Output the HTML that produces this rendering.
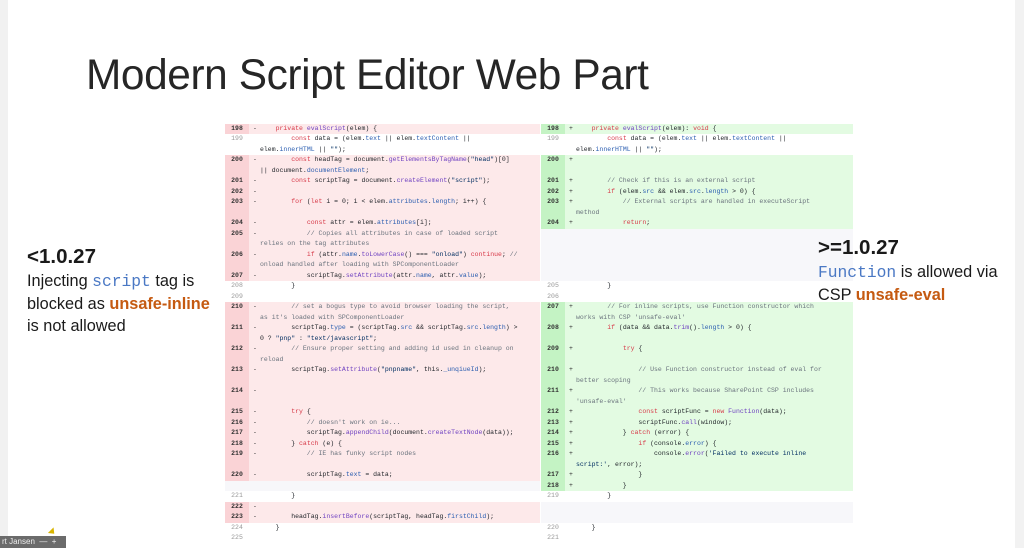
<!DOCTYPE html>
<html><head><meta charset="utf-8"><style>
*{margin:0;padding:0;box-sizing:border-box}
body{width:1024px;height:548px;overflow:hidden;background:#fff;position:relative;font-family:"Liberation Sans",sans-serif}
.lstrip{position:absolute;left:0;top:0;width:8px;height:548px;background:#f1f1f1}
.rstrip{position:absolute;right:0;top:0;width:9px;height:548px;background:#f2f2f2}
h1{position:absolute;left:86px;top:51px;font-weight:normal;font-size:42.4px;color:#262626;letter-spacing:-0.4px;white-space:nowrap}
.panel{position:absolute;top:123.5px;font-family:"Liberation Mono",monospace;font-size:6.5px;color:#1f2328}
.row{position:relative;line-height:10.5px;white-space:pre}
.row .g{position:absolute;left:0;top:0;bottom:0;width:24px;text-align:center;color:#333;font-weight:bold}
.row .s{position:absolute;top:0;color:#333}
.row .c{position:absolute;top:0}
.d{background:#fde9ea}.d .g{background:#fad3d6}
.a{background:#e3fbe2}.a .g{background:#c4f3c4}
.n{background:#fff}.n .g{color:#999;font-weight:normal}
.e{background:#f7f7fa}
.k{color:#d73a49}.f{color:#6f42c1}.b{color:#2a5db0}.m{color:#6a737d}.t{color:#032f62}
.L{left:225px;width:315px}.L .s{left:28px}.L .c{left:35px}
.R{left:541px;width:312px}.R .s{left:28px}.R .c{left:35px}
.txt{position:absolute;color:#1a1a1a;font-size:16.3px;line-height:22px;white-space:nowrap}
.txt b.h{font-size:20.5px;display:block;line-height:26px}
.mono{font-family:"Liberation Mono",monospace;color:#4a78c4}
.or{color:#c55a11;font-weight:bold}
.bar{position:absolute;left:0;top:536px;width:66px;height:12px;background:#6b6b6b;color:#eee;font-size:8px;line-height:12px;padding-left:2px;white-space:nowrap}
</style></head><body>
<div class="lstrip"></div><div class="rstrip"></div>
<h1>Modern Script Editor Web Part</h1>

<div class="panel L">
<div class="row d" style="height:10.5px"><span class="g">198</span><span class="s">-</span><span class="c">    <span class="k">private</span> <span class="f">evalScript</span>(elem) {</span></div>
<div class="row n" style="height:21px"><span class="g">199</span><span class="c">        <span class="k">const</span> data = (elem.<span class="b">text</span> || elem.<span class="b">textContent</span> ||
elem.<span class="b">innerHTML</span> || <span class="t">""</span>);</span></div>
<div class="row d" style="height:21px"><span class="g">200</span><span class="s">-</span><span class="c">        <span class="k">const</span> headTag = document.<span class="f">getElementsByTagName</span>(<span class="t">"head"</span>)[0]
|| document.<span class="b">documentElement</span>;</span></div>
<div class="row d" style="height:10.5px"><span class="g">201</span><span class="s">-</span><span class="c">        <span class="k">const</span> scriptTag = document.<span class="f">createElement</span>(<span class="t">"script"</span>);</span></div>
<div class="row d" style="height:10.5px"><span class="g">202</span><span class="s">-</span></div>
<div class="row d" style="height:21px"><span class="g">203</span><span class="s">-</span><span class="c">        <span class="k">for</span> (<span class="k">let</span> i = 0; i &lt; elem.<span class="b">attributes</span>.<span class="b">length</span>; i++) {</span></div>
<div class="row d" style="height:10.5px"><span class="g">204</span><span class="s">-</span><span class="c">            <span class="k">const</span> attr = elem.<span class="b">attributes</span>[i];</span></div>
<div class="row d" style="height:21px"><span class="g">205</span><span class="s">-</span><span class="c"><span class="m">            // Copies all attributes in case of loaded script
relies on the tag attributes</span></span></div>
<div class="row d" style="height:21px"><span class="g">206</span><span class="s">-</span><span class="c">            <span class="k">if</span> (attr.<span class="b">name</span>.<span class="f">toLowerCase</span>() === <span class="t">"onload"</span>) <span class="k">continue</span>; <span class="m">//
onload handled after loading with SPComponentLoader</span></span></div>
<div class="row d" style="height:10.5px"><span class="g">207</span><span class="s">-</span><span class="c">            scriptTag.<span class="f">setAttribute</span>(attr.<span class="b">name</span>, attr.<span class="b">value</span>);</span></div>
<div class="row n" style="height:10.5px"><span class="g">208</span><span class="c">        }</span></div>
<div class="row n" style="height:10.5px"><span class="g">209</span></div>
<div class="row d" style="height:21px"><span class="g">210</span><span class="s">-</span><span class="c"><span class="m">        // set a bogus type to avoid browser loading the script,
as it's loaded with SPComponentLoader</span></span></div>
<div class="row d" style="height:21px"><span class="g">211</span><span class="s">-</span><span class="c">        scriptTag.<span class="b">type</span> = (scriptTag.<span class="b">src</span> &amp;&amp; scriptTag.<span class="b">src</span>.<span class="b">length</span>) &gt;
0 ? <span class="t">"pnp"</span> : <span class="t">"text/javascript"</span>;</span></div>
<div class="row d" style="height:21px"><span class="g">212</span><span class="s">-</span><span class="c"><span class="m">        // Ensure proper setting and adding id used in cleanup on
reload</span></span></div>
<div class="row d" style="height:21px"><span class="g">213</span><span class="s">-</span><span class="c">        scriptTag.<span class="f">setAttribute</span>(<span class="t">"pnpname"</span>, this.<span class="b">_unqiueId</span>);</span></div>
<div class="row d" style="height:21px"><span class="g">214</span><span class="s">-</span></div>
<div class="row d" style="height:10.5px"><span class="g">215</span><span class="s">-</span><span class="c">        <span class="k">try</span> {</span></div>
<div class="row d" style="height:10.5px"><span class="g">216</span><span class="s">-</span><span class="c"><span class="m">            // doesn't work on ie...</span></span></div>
<div class="row d" style="height:10.5px"><span class="g">217</span><span class="s">-</span><span class="c">            scriptTag.<span class="f">appendChild</span>(document.<span class="f">createTextNode</span>(data));</span></div>
<div class="row d" style="height:10.5px"><span class="g">218</span><span class="s">-</span><span class="c">        } <span class="k">catch</span> (e) {</span></div>
<div class="row d" style="height:21px"><span class="g">219</span><span class="s">-</span><span class="c"><span class="m">            // IE has funky script nodes</span></span></div>
<div class="row d" style="height:10.5px"><span class="g">220</span><span class="s">-</span><span class="c">            scriptTag.<span class="b">text</span> = data;</span></div>
<div class="row e" style="height:10.5px"></div>
<div class="row n" style="height:10.5px"><span class="g">221</span><span class="c">        }</span></div>
<div class="row d" style="height:10.5px"><span class="g">222</span><span class="s">-</span></div>
<div class="row d" style="height:10.5px"><span class="g">223</span><span class="s">-</span><span class="c">        headTag.<span class="f">insertBefore</span>(scriptTag, headTag.<span class="b">firstChild</span>);</span></div>
<div class="row n" style="height:10.5px"><span class="g">224</span><span class="c">    }</span></div>
<div class="row n" style="height:10.5px"><span class="g">225</span></div>
</div>

<div class="panel R">
<div class="row a" style="height:10.5px"><span class="g">198</span><span class="s">+</span><span class="c">    <span class="k">private</span> <span class="f">evalScript</span>(elem): <span class="k">void</span> {</span></div>
<div class="row n" style="height:21px"><span class="g">199</span><span class="c">        <span class="k">const</span> data = (elem.<span class="b">text</span> || elem.<span class="b">textContent</span> ||
elem.<span class="b">innerHTML</span> || <span class="t">""</span>);</span></div>
<div class="row a" style="height:21px"><span class="g">200</span><span class="s">+</span></div>
<div class="row a" style="height:10.5px"><span class="g">201</span><span class="s">+</span><span class="c"><span class="m">        // Check if this is an external script</span></span></div>
<div class="row a" style="height:10.5px"><span class="g">202</span><span class="s">+</span><span class="c">        <span class="k">if</span> (elem.<span class="b">src</span> &amp;&amp; elem.<span class="b">src</span>.<span class="b">length</span> &gt; 0) {</span></div>
<div class="row a" style="height:21px"><span class="g">203</span><span class="s">+</span><span class="c"><span class="m">            // External scripts are handled in executeScript
method</span></span></div>
<div class="row a" style="height:10.5px"><span class="g">204</span><span class="s">+</span><span class="c">            <span class="k">return</span>;</span></div>
<div class="row e" style="height:52.5px"></div>
<div class="row n" style="height:10.5px"><span class="g">205</span><span class="c">        }</span></div>
<div class="row n" style="height:10.5px"><span class="g">206</span></div>
<div class="row a" style="height:21px"><span class="g">207</span><span class="s">+</span><span class="c"><span class="m">        // For inline scripts, use Function constructor which
works with CSP 'unsafe-eval'</span></span></div>
<div class="row a" style="height:21px"><span class="g">208</span><span class="s">+</span><span class="c">        <span class="k">if</span> (data &amp;&amp; data.<span class="f">trim</span>().<span class="b">length</span> &gt; 0) {</span></div>
<div class="row a" style="height:21px"><span class="g">209</span><span class="s">+</span><span class="c">            <span class="k">try</span> {</span></div>
<div class="row a" style="height:21px"><span class="g">210</span><span class="s">+</span><span class="c"><span class="m">                // Use Function constructor instead of eval for
better scoping</span></span></div>
<div class="row a" style="height:21px"><span class="g">211</span><span class="s">+</span><span class="c"><span class="m">                // This works because SharePoint CSP includes
'unsafe-eval'</span></span></div>
<div class="row a" style="height:10.5px"><span class="g">212</span><span class="s">+</span><span class="c">                <span class="k">const</span> scriptFunc = <span class="k">new</span> <span class="f">Function</span>(data);</span></div>
<div class="row a" style="height:10.5px"><span class="g">213</span><span class="s">+</span><span class="c">                scriptFunc.<span class="f">call</span>(window);</span></div>
<div class="row a" style="height:10.5px"><span class="g">214</span><span class="s">+</span><span class="c">            } <span class="k">catch</span> (error) {</span></div>
<div class="row a" style="height:10.5px"><span class="g">215</span><span class="s">+</span><span class="c">                <span class="k">if</span> (console.<span class="b">error</span>) {</span></div>
<div class="row a" style="height:21px"><span class="g">216</span><span class="s">+</span><span class="c">                    console.<span class="f">error</span>(<span class="t">'Failed to execute inline
script:'</span>, error);</span></div>
<div class="row a" style="height:10.5px"><span class="g">217</span><span class="s">+</span><span class="c">                }</span></div>
<div class="row a" style="height:10.5px"><span class="g">218</span><span class="s">+</span><span class="c">            }</span></div>
<div class="row n" style="height:10.5px"><span class="g">219</span><span class="c">        }</span></div>
<div class="row e" style="height:21px"></div>
<div class="row n" style="height:10.5px"><span class="g">220</span><span class="c">    }</span></div>
<div class="row n" style="height:10.5px"><span class="g">221</span></div>
</div>

<div class="txt" style="left:27px;top:244px"><b class="h">&lt;1.0.27</b>Injecting <span class="mono">script</span> tag is<br>blocked as <span class="or">unsafe-inline</span><br>is not allowed</div>
<div class="txt" style="left:818px;top:235px"><b class="h">&gt;=1.0.27</b><span class="mono">Function</span> is allowed via<br>CSP <span class="or">unsafe-eval</span></div>

<div class="bar">rt Jansen &nbsp;— &nbsp;+</div>
<div style="position:absolute;left:50px;top:528px;width:0;height:0;border-left:5px solid #d8b400;border-top:4px solid transparent;border-bottom:4px solid transparent;transform:rotate(45deg)"></div>
</body></html>
